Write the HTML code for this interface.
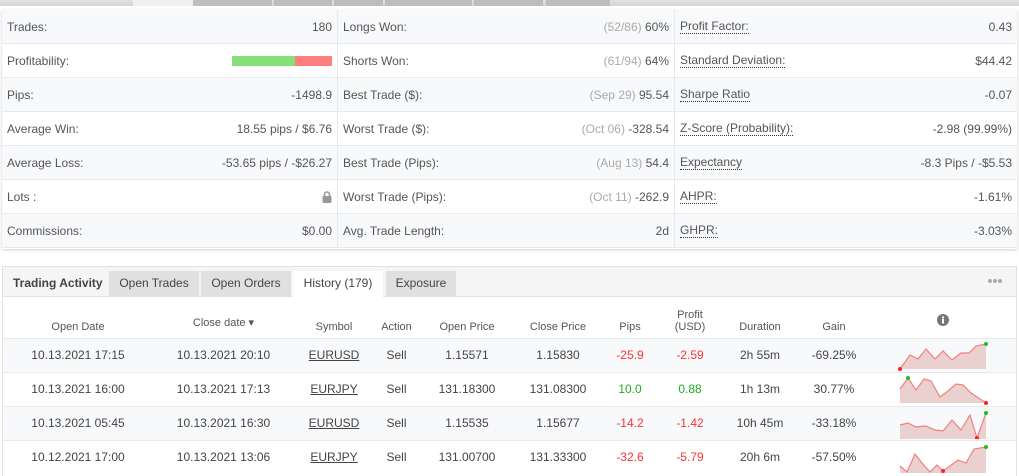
<!DOCTYPE html>
<html><head><meta charset="utf-8"><style>
*{box-sizing:border-box;margin:0;padding:0}
body{width:1019px;height:471px;overflow:hidden;background:#fff;font-family:"Liberation Sans",sans-serif;font-size:12px;color:#555;position:relative}
.strip{position:absolute;left:0;top:0;width:1019px;height:6px;background:linear-gradient(#e2e2e2,#d4d4d4)}
.strip div{position:absolute;top:0;height:6px;background:#bdbdbd}
.panel{position:absolute;left:2px;top:10px;width:1015px;height:239px;box-shadow:0 1px 3px rgba(0,0,0,.2);background:#fff}
.col{position:absolute;top:0}
.r{height:34px;border-bottom:1px solid #e6e9ee;display:flex;align-items:center;justify-content:space-between;padding:0 5px}
.r:nth-child(odd){background:#f8f9fb}
.g{color:#aaa}
.u{border-bottom:1px dotted #333;line-height:13px}
.c1{left:0;width:336px;border-right:1px solid #e6e9ee}
.c2{left:336px;width:337px;border-right:1px solid #e6e9ee}
.c3{left:673px;width:342px}
.p2{position:absolute;left:2px;top:266px;width:1015px;height:210px;border:1px solid #e2e2e2;border-bottom:none}
.hd{height:30px;background:#f5f5f5;border-bottom:1px solid #e4e4e4;position:relative}
.tab{position:absolute;top:4px;height:26px;line-height:25px;text-align:center;background:#e0e0e0;color:#444}
table{border-collapse:collapse;position:absolute;left:0;top:30px;width:1013px}
td,th{text-align:center;font-weight:normal;color:#444;padding:0}
th{height:41px;vertical-align:bottom;padding-bottom:5px;font-size:11px;color:#555}
td{height:34px;border-top:1px solid #e6e9ee;font-size:12px}
td.sp{text-align:left;padding-left:31px}
tr.o td{background:#f8f9fb}
.red{color:#f33}.grn{color:#2a2}
.sym{text-decoration:underline}
</style></head><body>
<div class="strip"><div style="left:133px;width:60px;background:#f0f0f0"></div><div style="left:193px;width:79px"></div><div style="left:274px;width:58px"></div><div style="left:334px;width:49px"></div><div style="left:385px;width:87px"></div><div style="left:474px;width:69px"></div><div style="left:546px;width:64px"></div></div>
<div class="panel">
<div class="col c1">
<div class="r"><span>Trades:</span><span>180</span></div>
<div class="r"><span>Profitability:</span><span style="display:flex;width:100px;height:10px"><span style="width:63px;background:#86e078"></span><span style="width:37px;background:#ff8080"></span></span></div>
<div class="r"><span>Pips:</span><span>-1498.9</span></div>
<div class="r"><span>Average Win:</span><span>18.55 pips / $6.76</span></div>
<div class="r"><span>Average Loss:</span><span>-53.65 pips / -$26.27</span></div>
<div class="r"><span>Lots :</span><svg width="10" height="12" viewBox="0 0 10 12"><path d="M2.5 5V3.5a2.5 2.5 0 0 1 5 0V5" fill="none" stroke="#999" stroke-width="1.6"/><rect x="0.5" y="5" width="9" height="7" rx="1" fill="#999"/></svg></div>
<div class="r"><span>Commissions:</span><span>$0.00</span></div>
</div>
<div class="col c2">
<div class="r"><span>Longs Won:</span><span><span class="g">(52/86)</span> 60%</span></div>
<div class="r"><span>Shorts Won:</span><span><span class="g">(61/94)</span> 64%</span></div>
<div class="r"><span>Best Trade ($):</span><span><span class="g">(Sep 29)</span> 95.54</span></div>
<div class="r"><span>Worst Trade ($):</span><span><span class="g">(Oct 06)</span> -328.54</span></div>
<div class="r"><span>Best Trade (Pips):</span><span><span class="g">(Aug 13)</span> 54.4</span></div>
<div class="r"><span>Worst Trade (Pips):</span><span><span class="g">(Oct 11)</span> -262.9</span></div>
<div class="r"><span>Avg. Trade Length:</span><span>2d</span></div>
</div>
<div class="col c3">
<div class="r"><span class="u">Profit Factor:</span><span>0.43</span></div>
<div class="r"><span class="u">Standard Deviation:</span><span>$44.42</span></div>
<div class="r"><span class="u">Sharpe Ratio</span><span>-0.07</span></div>
<div class="r"><span class="u">Z-Score (Probability):</span><span>-2.98 (99.99%)</span></div>
<div class="r"><span class="u">Expectancy</span><span>-8.3 Pips / -$5.53</span></div>
<div class="r"><span class="u">AHPR:</span><span>-1.61%</span></div>
<div class="r"><span class="u">GHPR:</span><span>-3.03%</span></div>
</div>
</div>
<div class="p2">
<div class="hd">
<div style="position:absolute;left:10px;top:9px;font-weight:bold;color:#444">Trading Activity</div>
<div class="tab" style="left:106px;width:90px">Open Trades</div>
<div class="tab" style="left:198px;width:90px">Open Orders</div>
<div class="tab" style="left:290px;width:90px;background:#fff;height:27px">History (179)</div>
<div class="tab" style="left:383px;width:70px">Exposure</div>
<div style="position:absolute;right:14px;top:12px;display:flex;gap:1px"><i style="width:4px;height:4px;border-radius:2px;background:#aaa"></i><i style="width:4px;height:4px;border-radius:2px;background:#aaa"></i><i style="width:4px;height:4px;border-radius:2px;background:#aaa"></i></div>
</div>
<table>
<colgroup><col style="width:150px"><col style="width:141px"><col style="width:80px"><col style="width:45px"><col style="width:96px"><col style="width:86px"><col style="width:58px"><col style="width:62px"><col style="width:78px"><col style="width:70px"><col style="width:130px"><col></colgroup>
<tr><th>Open Date</th><th><span style="position:relative;top:-4px">Close date ▾</span></th><th>Symbol</th><th>Action</th><th>Open Price</th><th>Close Price</th><th>Pips</th><th>Profit<br>(USD)</th><th>Duration</th><th>Gain</th><th style="text-align:left;padding-left:68px"><svg width="12" height="12" style="position:relative;top:-4px"><circle cx="6" cy="6" r="6" fill="#777"/><rect x="5" y="5" width="2" height="4.5" fill="#fff"/><rect x="5" y="2.5" width="2" height="1.8" fill="#fff"/></svg></th><th></th></tr>
<tr class="o"><td>10.13.2021 17:15</td><td>10.13.2021 20:10</td><td class="sym">EURUSD</td><td>Sell</td><td>1.15571</td><td>1.15830</td><td class="red">-25.9</td><td class="red">-2.59</td><td>2h 55m</td><td>-69.25%</td><td class="sp"><svg width="90" height="32" viewBox="-2 -1 90 32" style="display:block;margin-left:-2px"><path d="M0,29 10,15 18,19 26,9 35,19 43,11 52,20 61,13 69,13 76,6 86,4 86,29Z" fill="#ebd0d0"/><path d="M0,29 10,15 18,19 26,9 35,19 43,11 52,20 61,13 69,13 76,6 86,4" fill="none" stroke="#f08080" stroke-width="1.2"/><circle cx="0" cy="29" r="2" fill="#f22"/><circle cx="86" cy="4" r="2" fill="#2b2"/></svg></td><td></td></tr>
<tr><td>10.13.2021 16:00</td><td>10.13.2021 17:13</td><td class="sym">EURJPY</td><td>Sell</td><td>131.18300</td><td>131.08300</td><td class="grn">10.0</td><td class="grn">0.88</td><td>1h 13m</td><td>30.77%</td><td class="sp"><svg width="90" height="32" viewBox="-2 -1 90 32" style="display:block;margin-left:-2px"><path d="M0,15 8,4 16,16 24,5 31,7 40,23 48,17 56,10 63,11 71,19 86,29 86,29 0,29Z" fill="#ebd0d0"/><path d="M0,15 8,4 16,16 24,5 31,7 40,23 48,17 56,10 63,11 71,19 86,29" fill="none" stroke="#f08080" stroke-width="1.2"/><circle cx="8" cy="4" r="2" fill="#2b2"/><circle cx="86" cy="29" r="2" fill="#f22"/></svg></td><td></td></tr>
<tr class="o"><td>10.13.2021 05:45</td><td>10.13.2021 16:30</td><td class="sym">EURUSD</td><td>Sell</td><td>1.15535</td><td>1.15677</td><td class="red">-14.2</td><td class="red">-1.42</td><td>10h 45m</td><td>-33.18%</td><td class="sp"><svg width="90" height="32" viewBox="-2 -1 90 32" style="display:block;margin-left:-2px"><path d="M0,17 8,15 16,19 26,18 35,22 43,23 52,12 61,22 70,7 77,30 86,5 86,31 0,31Z" fill="#ebd0d0"/><path d="M0,17 8,15 16,19 26,18 35,22 43,23 52,12 61,22 70,7 77,30 86,5" fill="none" stroke="#f08080" stroke-width="1.2"/><circle cx="77" cy="30" r="2" fill="#f22"/><circle cx="86" cy="5" r="2" fill="#2b2"/></svg></td><td></td></tr>
<tr><td>10.12.2021 17:00</td><td>10.13.2021 13:06</td><td class="sym">EURJPY</td><td>Sell</td><td>131.00700</td><td>131.33300</td><td class="red">-32.6</td><td class="red">-5.79</td><td>20h 6m</td><td>-57.50%</td><td class="sp"><svg width="90" height="32" viewBox="-2 -1 90 32" style="display:block;margin-left:-2px"><path d="M0,24 7,30 15,12 22,21 30,30 37,23 43,29 50,24 58,18 66,21 74,7 86,5 86,31 0,31Z" fill="#ebd0d0"/><path d="M0,24 7,30 15,12 22,21 30,30 37,23 43,29 50,24 58,18 66,21 74,7 86,5" fill="none" stroke="#f08080" stroke-width="1.2"/><circle cx="43" cy="29" r="2" fill="#f22"/><circle cx="86" cy="5" r="2" fill="#2b2"/></svg></td><td></td></tr>
</table>
</div>
</body></html>
